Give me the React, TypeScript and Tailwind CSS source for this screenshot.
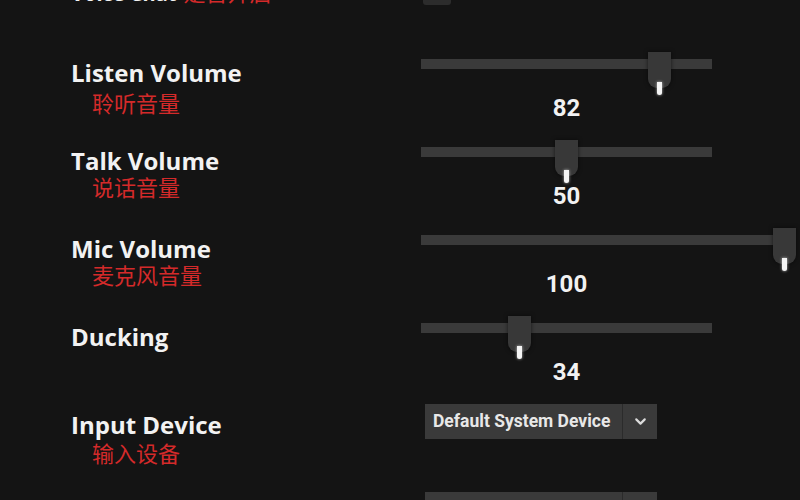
import { ChevronDown, Check } from "lucide-react";

interface SliderRow {
  label: string;
  zh?: string;
  zhGap: string;
  value: number;
  track: string;
  span: number;
}

const sliders: SliderRow[] = [
  { label: "Listen Volume", zh: "聆听音量", zhGap: "mt-[9px]", value: 82, track: "w-[291px]", span: 291 },
  { label: "Talk Volume", zh: "说话音量", zhGap: "mt-[5px]", value: 50, track: "w-[291px]", span: 291 },
  { label: "Mic Volume", zh: "麦克风音量", zhGap: "mt-[5px]", value: 100, track: "w-[363px]", span: 363 },
  { label: "Ducking", zhGap: "", value: 34, track: "w-[291px]", span: 291 },
];

function Label({ label, zh, zhGap }: { label: string; zh?: string; zhGap: string }) {
  return (
    <div className="w-[421px] shrink-0 pl-[71px] pt-[9px]">
      <p className="font-['Open_Sans',sans-serif] text-[24px] font-bold leading-none text-[#f2f2f2]">
        {label}
      </p>
      {zh && (
        <p className={`${zhGap} pl-[21px] text-[22px] leading-none text-[#d42a2a]`}>
          {zh}
        </p>
      )}
    </div>
  );
}

function Slider({ value, track, span }: { value: number; track: string; span: number }) {
  return (
    <div>
      <div className={`relative h-[38px] pt-[7px] ${track}`}>
        <div className="h-[10px] bg-[#3a3a3a]" />
        <div
          className="absolute top-0 h-[36px] w-[23px] rounded-b-[9px] bg-[#383838] shadow-[0_0_4px_rgba(0,0,0,0.6)]"
          style={{ left: (value / 100) * span - 11.5 }}
        >
          <div className="absolute bottom-[-7px] left-[9px] h-[13px] w-[5px] rounded-b-full bg-[#f4f4f4] shadow-[0_0_3px_rgba(255,255,255,0.7)]" />
        </div>
      </div>
      <p className="mt-[6px] w-[291px] text-center text-[24px] font-bold leading-none text-[#f2f2f2]">
        {value}
      </p>
    </div>
  );
}

function Dropdown({ text }: { text: string }) {
  return (
    <div className="ml-[4px] flex h-[35px] w-[232px] bg-[#3a3a3a]">
      <div className="flex flex-1 items-center pl-[8px] text-[17.5px] font-bold text-[#e8e8e8]">
        {text}
      </div>
      <div className="w-px bg-[#2b2b2b]" />
      <div className="flex w-[34px] items-center justify-center text-[#dcdcdc]">
        <ChevronDown size={17} strokeWidth={3} />
      </div>
    </div>
  );
}

export default function App() {
  return (
    <div className="h-[500px] w-[800px] overflow-hidden bg-[#141414] font-['Roboto','Noto_Sans_CJK_SC',sans-serif]">
      <div className="flex h-[52px] items-start">
        <div className="-mt-[17px] flex w-[421px] shrink-0 items-baseline pl-[71px]">
          <p className="font-['Open_Sans',sans-serif] text-[20px] font-bold leading-none text-[#f2f2f2]">
            Voice Chat
          </p>
          <p className="ml-[7px] text-[22px] leading-none text-[#d42a2a]">是否开启</p>
        </div>
        <div className="-mt-[22px] ml-[2px] flex h-[27px] w-[28px] items-center justify-center rounded-[3px] bg-[#2c2c2c]">
          <Check size={18} strokeWidth={3} className="text-[#3fae4a]" />
        </div>
      </div>

      {sliders.map((s) => (
        <div key={s.label} className="flex h-[88px]">
          <Label label={s.label} zh={s.zh} zhGap={s.zhGap} />
          <Slider value={s.value} track={s.track} span={s.span} />
        </div>
      ))}

      <div className="flex h-[88px]">
        <Label label="Input Device" zh="输入设备" zhGap="mt-[7px]" />
        <Dropdown text="Default System Device" />
      </div>

      <div className="flex h-[88px]">
        <Label label="Output Device" zh="输出设备" zhGap="mt-[7px]" />
        <Dropdown text="Default System Device" />
      </div>
    </div>
  );
}
